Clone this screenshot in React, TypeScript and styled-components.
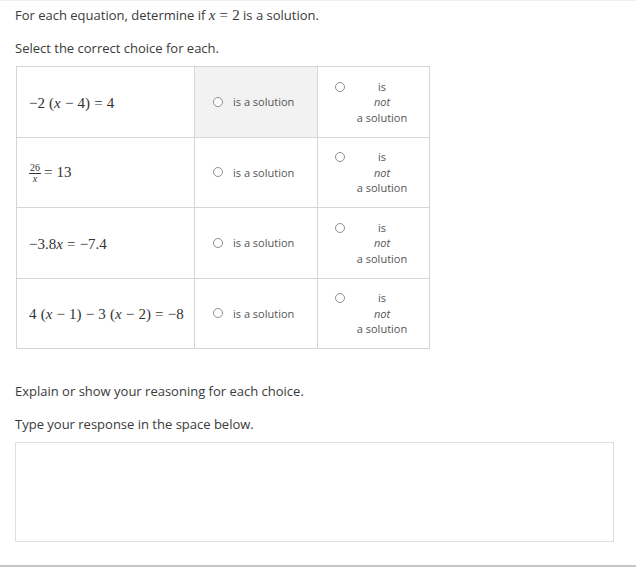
import styled, { createGlobalStyle } from 'styled-components';

const GlobalStyle = createGlobalStyle`
  body {
    margin: 0;
    background: #fff;
    font-family: 'Open Sans', 'Liberation Sans', sans-serif;
  }
`;

const Page = styled.div`
  width: 636px;
  min-height: 567px;
  padding: 5px 0 0 15px;
  box-sizing: border-box;
  border-top: 1px solid #f0f0f0;
  border-bottom: 2px solid #c4c4c4;
  color: #3a3a3a;
`;

const Prompt = styled.p<{ gap?: number }>`
  margin: ${(props) => props.gap ?? 0}px 0 0;
  font-size: 13px;
  line-height: 18px;
`;

const Math = styled.span`
  font-family: 'Liberation Serif', 'DejaVu Serif', serif;
  font-size: 15px;
  word-spacing: 0.4px;
  color: #333;
  white-space: nowrap;
`;

const Var = styled.i`
  font-style: italic;
`;

const Frac = styled.span`
  display: inline-flex;
  flex-direction: column;
  align-items: center;
  vertical-align: middle;
  font-size: 10px;
  line-height: 10px;
  margin-right: 3px;
`;

const Numer = styled.span`
  border-bottom: 1px solid #333;
  padding: 0 1px;
`;

const Table = styled.table`
  margin: 9px 0 0 1px;
  border-collapse: collapse;
  table-layout: fixed;
  width: 413px;
`;

const Cell = styled.td<{ w: number; shaded?: boolean }>`
  width: ${(props) => props.w}px;
  height: 70.5px;
  border: 1px solid #d6d6d6;
  background: ${(props) => (props.shaded ? '#f2f2f2' : '#fff')};
  vertical-align: middle;
  padding: 0;
  box-sizing: border-box;
`;

const EquationBox = styled.div`
  padding-left: 12px;
`;

const Choice = styled.label`
  display: flex;
  align-items: center;
  gap: 10px;
  padding-left: 18px;
  font-size: 11px;
  color: #555;
  cursor: pointer;
`;

const NotChoice = styled.label`
  display: flex;
  align-items: flex-start;
  padding: 0 13px 0 17px;
  font-size: 11px;
  line-height: 15.5px;
  color: #555;
  cursor: pointer;
`;

const Radio = styled.span<{ top?: number }>`
  flex: none;
  width: 8px;
  height: 8px;
  border: 1px solid #8f8f8f;
  border-radius: 50%;
  background: #fff;
  margin-top: ${(props) => props.top ?? 0}px;
`;

const NotText = styled.span`
  flex: 1;
  text-align: center;
  padding-left: 3px;
`;

const Answer = styled.div`
  margin-top: 9px;
  width: 599px;
  height: 100px;
  box-sizing: border-box;
  border: 1px solid #dedede;
`;

const rows = [
  {
    key: 'a',
    eq: (
      <>
        −2 (<Var>x</Var> − 4) = 4
      </>
    ),
  },
  {
    key: 'b',
    eq: (
      <>
        <Frac>
          <Numer>26</Numer>
          <Var>x</Var>
        </Frac>
        = 13
      </>
    ),
  },
  {
    key: 'c',
    eq: (
      <>
        −3.8<Var>x</Var> = −7.4
      </>
    ),
  },
  {
    key: 'd',
    eq: (
      <>
        4 (<Var>x</Var> − 1) − 3 (<Var>x</Var> − 2) = −8
      </>
    ),
  },
];

export default function App() {
  return (
    <>
      <GlobalStyle />
      <Page>
        <Prompt>
          For each equation, determine if{' '}
          <Math>
            <Var>x</Var> = 2
          </Math>{' '}
          is a solution.
        </Prompt>
        <Prompt gap={15}>Select the correct choice for each.</Prompt>

        <Table>
          <tbody>
            {rows.map((row, i) => (
              <tr key={row.key}>
                <Cell w={178}>
                  <EquationBox>
                    <Math>{row.eq}</Math>
                  </EquationBox>
                </Cell>
                <Cell w={123} shaded={i === 0}>
                  <Choice>
                    <Radio />
                    is a solution
                  </Choice>
                </Cell>
                <Cell w={112}>
                  <NotChoice>
                    <Radio top={3} />
                    <NotText>
                      is
                      <br />
                      <i>not</i>
                      <br />a solution
                    </NotText>
                  </NotChoice>
                </Cell>
              </tr>
            ))}
          </tbody>
        </Table>

        <Prompt gap={33}>Explain or show your reasoning for each choice.</Prompt>
        <Prompt gap={15}>Type your response in the space below.</Prompt>
        <Answer />
      </Page>
    </>
  );
}
